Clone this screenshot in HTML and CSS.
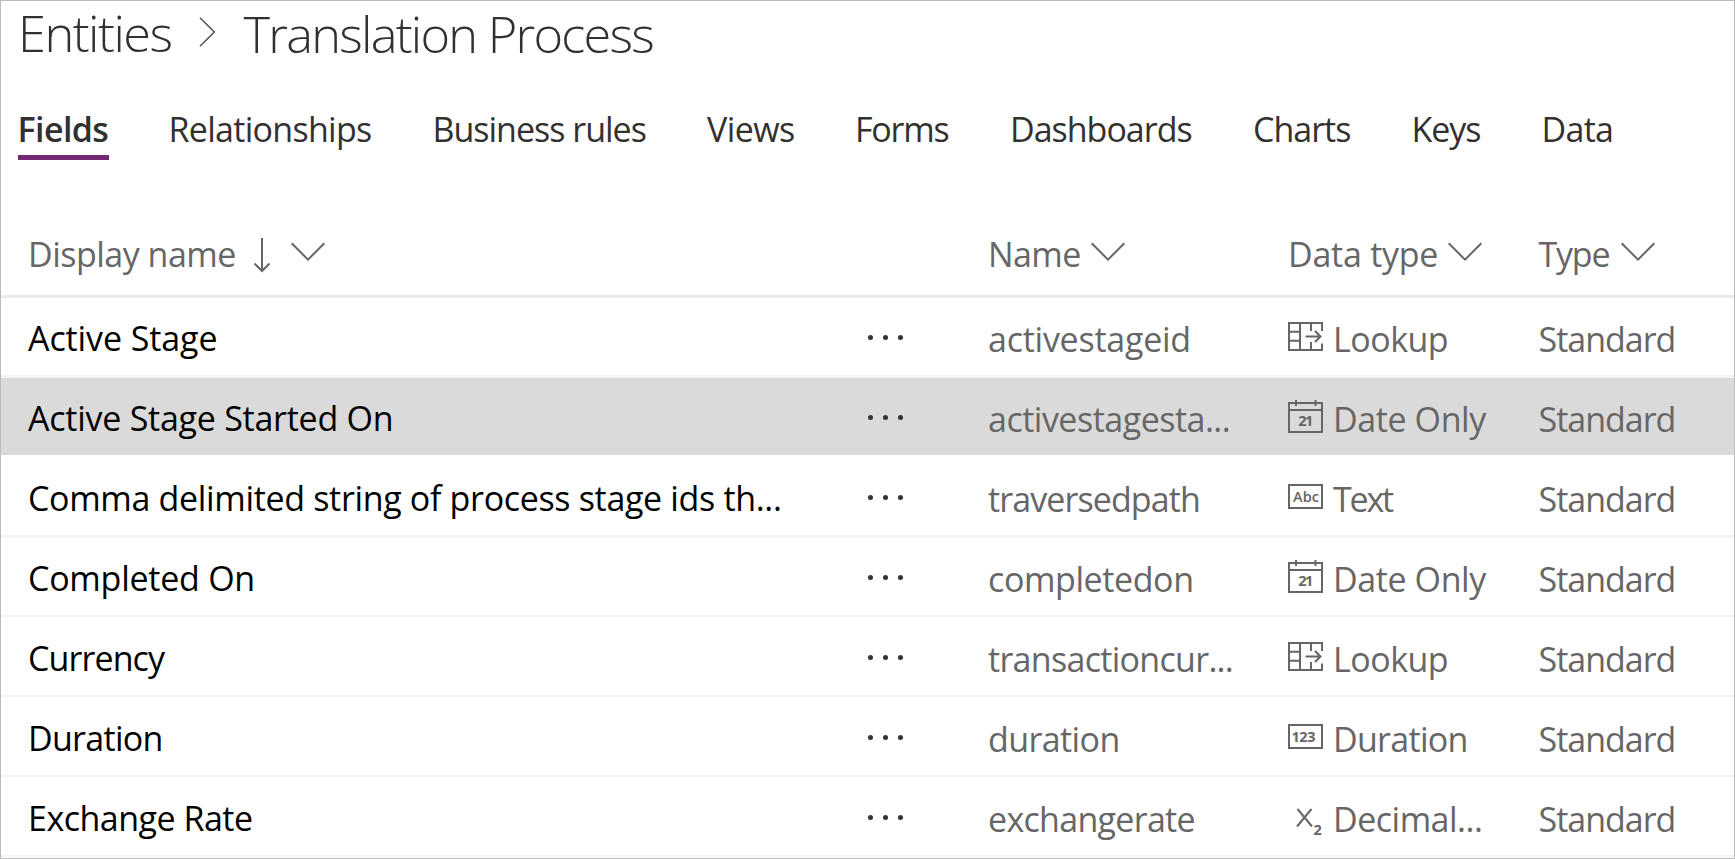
FILE: index.html
```html
<!DOCTYPE html>
<html lang="en">
<head>
<meta charset="utf-8">
<title>Translation Process</title>
<link rel="stylesheet" href="styles.css">
</head>
<body>
<main class="page">
  <nav class="crumbs">
    <span class="crumb-parent">Entities</span>
    <svg class="crumb-sep" viewBox="0 0 17 30"><path d="M1 .700 15.300 15 1 29.300"/></svg>
    <h1 class="crumb-current">Translation Process</h1>
  </nav>
  <div class="tabs">
    <div class="tab"><span class="active ls-6">Fields</span></div>
    <div class="tab ls-7">Relationships</div>
    <div class="tab ls-10">Business rules</div>
    <div class="tab ls-6">Views</div>
    <div class="tab ls-12">Forms</div>
    <div class="tab ls-10">Dashboards</div>
    <div class="tab ls-10">Charts</div>
    <div class="tab ls-11">Keys</div>
    <div class="tab ls-7">Data</div>
  </div>
  <div class="grid head">
    <div class="cell"><span class="ls-5">Display name</span><svg class="sort" viewBox="0 0 18 36"><path d="M9 1v33M1.500 26.500 9 34l7.500-7.500"/></svg><svg class="chev" viewBox="0 0 34 20"><path d="M.7 1.300 17 17.600 33.300 1.300"/></svg></div>
    <div></div>
    <div class="cell"><span class="w-name ls-6">Name</span><svg class="chev" viewBox="0 0 34 20"><path d="M.7 1.300 17 17.600 33.300 1.300"/></svg></div>
    <div class="cell"><span class="w-data ls-3">Data type</span><svg class="chev" viewBox="0 0 34 20"><path d="M.7 1.300 17 17.600 33.300 1.300"/></svg></div>
    <div class="cell"><span class="w-type ls-12">Type</span><svg class="chev" viewBox="0 0 34 20"><path d="M.7 1.300 17 17.600 33.300 1.300"/></svg></div>
  </div>
  <div class="grid row">
    <div class="name ls-1">Active Stage</div>
    <div class="more"><i></i><i></i><i></i></div>
    <div class="ls-3">activestageid</div>
    <div class="type"><svg class="icon" viewBox="0 0 36 40"><path d="M34 13V5H1v27h33v-6.500M12 5v27M1 13.700h11M1 22.700h11M23 5v8M23 24v8M17.500 18.500h15M27 13l5.500 5.500-5.500 5.500"/></svg><span class="ls-5">Lookup</span></div>
    <div class="ls-10">Standard</div>
  </div>
  <div class="grid row selected">
    <div class="name ls-3">Active Stage Started On</div>
    <div class="more"><i></i><i></i><i></i></div>
    <div class="ls-5">activestagesta...</div>
    <div class="type"><svg class="icon" viewBox="0 0 36 40"><path d="M1 5h33v29H1zM1 12h33M8 2v6M27.500 2v6"/><text x="10.300" y="28" textLength="15" class="bold">21</text></svg><span class="ls-4">Date Only</span></div>
    <div class="ls-10">Standard</div>
  </div>
  <div class="grid row">
    <div class="name ls-35">Comma delimited string of process stage ids th...</div>
    <div class="more"><i></i><i></i><i></i></div>
    <div class="ls-9">traversedpath</div>
    <div class="type"><svg class="icon" viewBox="0 0 36 40"><path d="M1 7h33v23H1z"/><text x="5" y="24" textLength="26" class="semi">Abc</text></svg><span class="ls-22">Text</span></div>
    <div class="ls-10">Standard</div>
  </div>
  <div class="grid row thin">
    <div class="name ls-3">Completed On</div>
    <div class="more"><i></i><i></i><i></i></div>
    <div class="ls-4">completedon</div>
    <div class="type"><svg class="icon" viewBox="0 0 36 40"><path d="M1 5h33v29H1zM1 12h33M8 2v6M27.500 2v6"/><text x="10.300" y="28" textLength="15" class="bold">21</text></svg><span class="ls-4">Date Only</span></div>
    <div class="ls-10">Standard</div>
  </div>
  <div class="grid row thin">
    <div class="name ls-9">Currency</div>
    <div class="more"><i></i><i></i><i></i></div>
    <div class="ls-7">transactioncur...</div>
    <div class="type"><svg class="icon" viewBox="0 0 36 40"><path d="M34 13V5H1v27h33v-6.500M12 5v27M1 13.700h11M1 22.700h11M23 5v8M23 24v8M17.500 18.500h15M27 13l5.500 5.500-5.500 5.500"/></svg><span class="ls-5">Lookup</span></div>
    <div class="ls-10">Standard</div>
  </div>
  <div class="grid row thin">
    <div class="name ls-7">Duration</div>
    <div class="more"><i></i><i></i><i></i></div>
    <div class="ls-6">duration</div>
    <div class="type"><svg class="icon" viewBox="0 0 36 40"><path d="M1 7h33v23H1z"/><text x="3.500" y="23.500" textLength="24" class="bold">123</text></svg><span class="ls-7">Duration</span></div>
    <div class="ls-10">Standard</div>
  </div>
  <div class="grid row thin">
    <div class="name ls-5">Exchange Rate</div>
    <div class="more"><i></i><i></i><i></i></div>
    <div class="ls-7">exchangerate</div>
    <div class="type"><svg class="icon" viewBox="0 0 36 40"><path d="M9.500 11l14.500 17.500M23.500 11 9 28.500"/><text x="25.600" y="37" class="bold">2</text></svg><span class="ls-5">Decimal...</span></div>
    <div class="ls-10">Standard</div>
  </div>
</main>
</body>
</html>
```
FILE: styles.css
```css
* { box-sizing: border-box; }

body {
  margin: 0;
  background: #fff;
  color: #323130;
  font: 34px/46px "Open Sans", "Noto Sans", sans-serif;
}

svg { display: block; flex: none; fill: none; stroke: #666; stroke-width: 2; }
svg text { font-size: 14.5px; line-height: 16px; letter-spacing: 0; fill: #666; stroke: none; }
.bold { font-weight: 700; }
.semi { font-weight: 600; }

.page {
  width: 1735px;
  height: 859px;
  border: 1px solid #bbb;
  overflow: hidden;
  white-space: nowrap;
}

/* Breadcrumb */
.crumbs {
  display: flex;
  align-items: flex-start;
  height: 94px;
  padding-left: 17px;
  font-size: 50.500px;
  font-weight: 300;
  line-height: 63px;
}
.crumb-parent { width: 181px; letter-spacing: -1.5px; }
.crumb-sep { width: 17px; height: 30px; margin-top: 16px; stroke: #555; stroke-width: 1.6; }
.crumb-current {
  margin: 1px 0 0 27.500px;
  font: inherit;
  letter-spacing: -1.75px;
}

/* Tabs */
.tabs {
  display: grid;
  grid-template-columns: 151px 264px 274.500px 148px 155px 243px 158.500px 130px auto;
  height: 124px;
  padding: 11px 0 0 16.500px;
}
.active {
  display: inline-block;
  height: 54px;
  padding-right: 1px;
  border-bottom: 5px solid #742774;
  font-weight: 600;
}

/* Field list */
.grid {
  display: grid;
  grid-template-columns: 836px 124px 300px 250.500px auto;
  padding-left: 27px;
  align-items: start;
  color: #666;
}
.head { height: 79px; border-bottom: 3px solid #eaeaea; }
.cell { display: flex; padding-top: 12px; }
.sort { width: 18px; height: 36px; margin: 6px 0 0 17.500px; }
.chev { width: 34px; height: 20px; margin-top: 11px; }
.sort + .chev { margin-left: 20px; }
.w-name { width: 102.500px; }
.w-data { width: 159.500px; }
.w-type { width: 82px; }

.row { height: 80px; border-bottom: 3px solid #f3f3f3; line-height: 83px; }
.thin { height: 79px; margin-bottom: 1px; border-bottom-width: 2px; }
.selected { background: #dadada; border-bottom-color: #fff; }
.name { color: #000; line-height: 81px; }
.more { display: flex; gap: 10px; padding: 37px 0 0 4px; }
.more i { width: 5px; height: 5px; border-radius: 50%; background: #333; }
.type { display: flex; }
.icon { width: 36px; height: 40px; margin: 20px 9px 0 0; }

/* Letter tracking, tenths of a pixel */
.ls-1 { letter-spacing: -.1px; }
.ls-3 { letter-spacing: -.25px; }
.ls-35 { letter-spacing: -.33px; }
.ls-4 { letter-spacing: -.4px; }
.ls-5 { letter-spacing: -.5px; }
.ls-6 { letter-spacing: -.6px; }
.ls-7 { letter-spacing: -.7px; }
.ls-9 { letter-spacing: -.9px; }
.ls-10 { letter-spacing: -1px; }
.ls-11 { letter-spacing: -1.1px; }
.ls-12 { letter-spacing: -1.2px; }
.ls-22 { letter-spacing: -2.2px; }
```
